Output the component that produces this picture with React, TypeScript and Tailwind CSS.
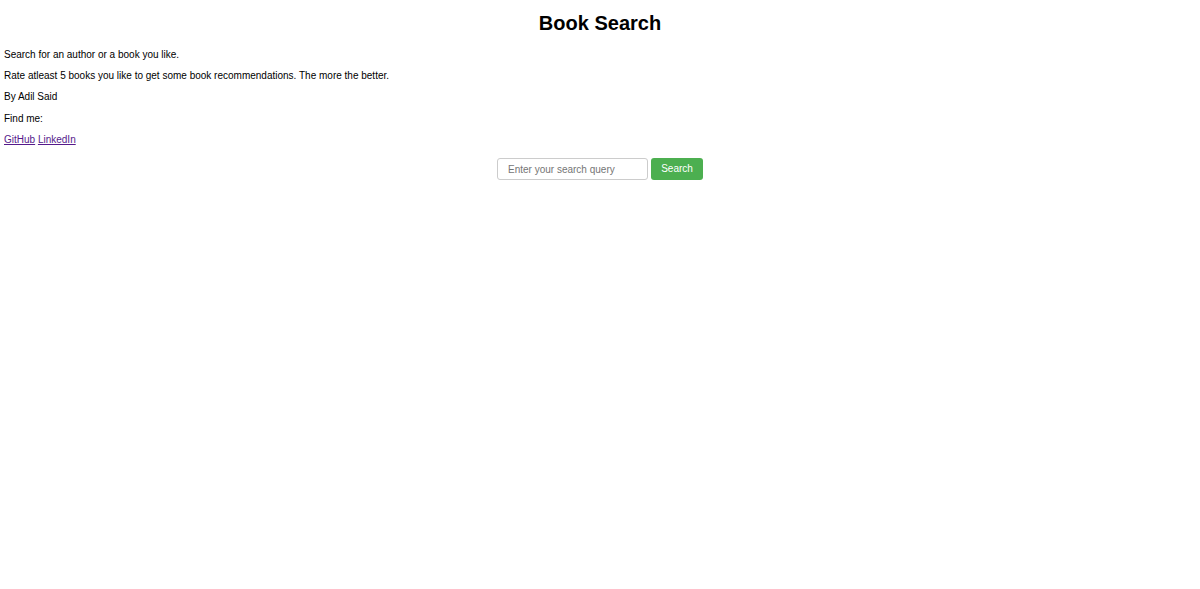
import React from "react";

export default function App() {
  return (
    <div
      className="min-h-[589px] bg-white px-[4px] text-[10px] leading-[11.25px] text-black"
      style={{ fontFamily: '"Liberation Sans", Arial, sans-serif' }}
    >
      <div className="pt-[12.4px]">
        <h1 className="text-center text-[20px] font-bold leading-[23px]">Book Search</h1>
        <div className="mt-[13.4px] flex flex-col gap-[10px]">
          <p>Search for an author or a book you like.</p>
          <p>Rate atleast 5 books you like to get some book recommendations. The more the better.</p>
          <p>By Adil Said</p>
          <p>Find me:</p>
          <p>
            <a href="#" className="text-[#551a8b] underline">GitHub</a>{" "}
            <a href="#" className="text-[#551a8b] underline">LinkedIn</a>
          </p>
        </div>
        <form
          className="mt-[13px] flex items-center justify-center gap-[3px]"
          onSubmit={(e) => e.preventDefault()}
        >
          <input
            type="text"
            placeholder="Enter your search query"
            className="h-[22px] w-[151px] rounded-[3px] border border-[#ccc] px-[10px] text-[10px] text-black outline-none placeholder:text-[#757575]"
          />
          <button
            type="submit"
            className="h-[22px] w-[52px] rounded-[3px] bg-[#4caf50] text-[10px] text-white"
          >
            Search
          </button>
        </form>
      </div>
    </div>
  );
}
